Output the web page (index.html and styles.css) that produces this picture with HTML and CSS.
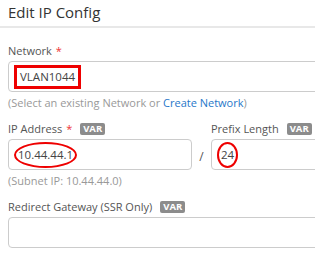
FILE: index.html
```html
<!DOCTYPE html>
<html lang="en">
<head>
    <meta charset="UTF-8">
    <meta name="viewport" content="width=device-width, initial-scale=1.0">
    <title>Edit IP Config</title>
    <link rel="stylesheet" href="styles.css">
</head>
<body>
    <div class="header">Edit IP Config</div>
    <div class="form">
        <div class="field">
            <div class="label">Network <span class="req">*</span></div>
            <div class="input"><span class="mark-box">VLAN1044</span></div>
            <div class="help">(Select an existing Network or <span class="link">Create Network</span>)</div>
        </div>

        <div class="row">
            <div class="field ip">
                <div class="label">IP Address <span class="req">*</span> <span class="badge">VAR</span></div>
                <div class="input"><span class="mark-oval">10.44.44.1</span></div>
                <div class="help">(Subnet IP: 10.44.44.0)</div>
            </div>
            <div class="slash">/</div>
            <div class="field prefix">
                <div class="label">Prefix Length <span class="badge">VAR</span></div>
                <div class="input"><span class="mark-oval">24</span></div>
            </div>
        </div>

        <div class="field">
            <div class="label">Redirect Gateway (SSR Only) <span class="badge">VAR</span></div>
            <div class="input"></div>
        </div>
    </div>
</body>
</html>
```

FILE: styles.css
```css
body {
    margin: 0;
    font-family: "Open Sans", "Liberation Sans", sans-serif;
    color: #333;
    background-color: #fff;
    overflow: hidden;
}
.header {
    height: 26px;
    line-height: 25px;
    padding: 0 8px;
    font-size: 15px;
    color: #333;
    border-bottom: 2px solid #e8e8e8;
}
.form {
    width: 340px;
    padding: 15px 8px 0;
}
.field {
    margin-bottom: 10px;
}
.label {
    font-size: 11px;
    line-height: 16px;
    color: #555;
    margin-bottom: 2px;
    display: flex;
    align-items: center;
    gap: 4px;
}
.req {
    color: #e33;
}
.badge {
    background-color: #8c8c8c;
    color: #fff;
    font-size: 9.5px;
    font-weight: 700;
    line-height: 12px;
    padding: 0 3px;
    border-radius: 2px;
    margin-left: 4px;
}
.input {
    height: 31px;
    box-sizing: border-box;
    border: 1px solid #ccc;
    border-radius: 4px;
    display: flex;
    align-items: center;
    padding-left: 5px;
    font-size: 11.5px;
    color: #444;
}
.help {
    font-size: 11px;
    line-height: 16px;
    color: #999;
    margin-top: 3px;
}
.link {
    color: #1f77c9;
}
.row {
    display: flex;
    align-items: flex-start;
}
.ip {
    width: 184px;
}
.slash {
    width: 19px;
    text-align: center;
    padding-top: 27px;
    font-size: 12px;
    color: #555;
}
.prefix {
    flex: 1;
}
.mark-box {
    border: 3px solid #e00;
    padding: 1px 3px;
    line-height: 16px;
}
.mark-oval {
    border: 2px solid #e00;
    border-radius: 50%;
    padding: 3px 2px;
    line-height: 16px;
}
```
